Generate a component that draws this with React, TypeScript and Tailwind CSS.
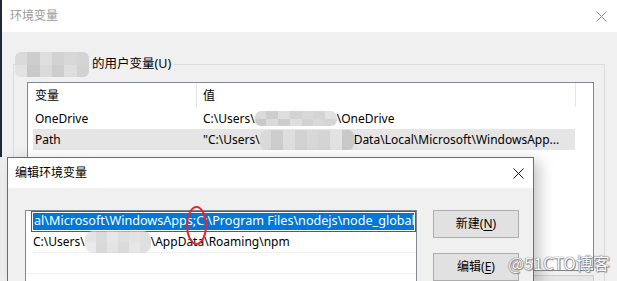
import React from 'react';

function CloseIcon({ className }: { className?: string }) {
  return (
    <svg width="11" height="11" viewBox="0 0 11 11" className={className}>
      <path d="M0.5 0.5 L10.5 10.5 M10.5 0.5 L0.5 10.5" stroke="currentColor" strokeWidth="1" fill="none" />
    </svg>
  );
}

// pixelated smear used where the screenshot hides a user name
function Smudge({ w, h, className }: { w: number; h: number; className?: string }) {
  const tiles = ['#dadada', '#d2d2d2', '#e2e2e2', '#cdcdcd', '#d8d8d8', '#c9c9c9', '#dedede', '#d4d4d4'];
  const cols = Math.max(1, Math.round(w / 12));
  return (
    <div
      className={`grid shrink-0 overflow-hidden rounded-[6px] blur-[0.6px] ${className ?? ''}`}
      style={{ width: w, height: h, gridTemplateColumns: `repeat(${cols}, 1fr)` }}
    >
      {Array.from({ length: cols * 2 }).map((_, i) => (
        <div key={i} style={{ background: tiles[(i * 3) % tiles.length] }} />
      ))}
    </div>
  );
}

function Underlined({ label, ch }: { label: string; ch: string }) {
  return (
    <span>
      {label}(<span className="underline underline-offset-2">{ch}</span>)
    </span>
  );
}

export default function App() {
  return (
    <div className="relative w-[617px] h-[281px] overflow-hidden bg-[#f0f0f0] font-['Noto_Sans','Noto_Sans_CJK_SC',sans-serif] text-[12px] leading-none text-black">
      <div className="flex h-full">
        <div className="flex w-[2px] shrink-0 flex-col">
          <div className="h-[157px] shrink-0 bg-[#1d283b]" />
          <div className="flex-1 bg-[#ededed]" />
        </div>

        {/* background window: 环境变量 */}
        <div className="flex min-w-0 flex-1 flex-col">
          <div className="flex h-[32px] shrink-0 items-center justify-between bg-white pl-[8px] pr-[10px]">
            <span className="text-[#9a9a9a]">环境变量</span>
            <CloseIcon className="text-[#8a8a8a]" />
          </div>

          <div className="min-h-0 flex-1 overflow-hidden px-[11px] pt-[20px] pr-[12px]">
            <fieldset className="border border-[#dcdcdc] pl-[13px] pr-[10px]">
              <legend className="-ml-[12px] flex items-center">
                <Smudge w={74} h={25} />
                <span className="pl-[3px] pr-[3px] text-[12.5px]">的用户变量(U)</span>
              </legend>

              <div className="mt-[5px] h-[189px] border border-[#828790] bg-white">
                <div className="flex h-[25px] pl-[5px]">
                  <div className="flex w-[163px] items-center pl-[2px]">变量</div>
                  <div className="h-[24px] w-px bg-[#e5e5e5]" />
                  <div className="flex w-[378px] items-center pl-[6px]">值</div>
                  <div className="h-[24px] w-px bg-[#e5e5e5]" />
                </div>
                <div className="ml-[5px] flex h-[21px] w-[542px] items-center">
                  <div className="w-[164px] pl-[2px]">OneDrive</div>
                  <div className="flex items-center pl-[6px]">
                    <span>C:\Users\</span>
                    <Smudge w={82} h={15} className="rounded-[3px]" />
                    <span>\OneDrive</span>
                  </div>
                </div>
                <div className="ml-[5px] flex h-[21px] w-[542px] items-center bg-[#e5e5e5]">
                  <div className="w-[164px] pl-[2px]">Path</div>
                  <div className="flex items-center overflow-hidden whitespace-nowrap pl-[6px]">
                    <span>"C:\Users\</span>
                    <Smudge w={94} h={20} className="rounded-[3px]" />
                    <span>Data\Local\Microsoft\WindowsApp...</span>
                  </div>
                </div>
              </div>

              <div className="mt-[4px] flex justify-end">
                <div className="h-[24px] w-[90px] border border-[#cfcfcf] bg-[#e6e6e6]" />
              </div>
            </fieldset>
          </div>
        </div>
      </div>

      {/* front dialog: 编辑环境变量 */}
      <div className="absolute left-[7px] top-[157px] flex h-[124px] w-[527px] flex-col overflow-hidden border border-b-0 border-[#1883d7] bg-[#f0f0f0] shadow-[6px_4px_14px_rgba(0,0,0,0.22)]">
        <div className="flex h-[30px] shrink-0 items-center justify-between bg-white pl-[7px] pr-[9px]">
          <span>编辑环境变量</span>
          <CloseIcon className="text-[#111]" />
        </div>

        <div className="flex min-h-0 flex-1 gap-[16px] pl-[17px] pt-[22px]">
          <div className="h-[100px] w-[392px] shrink-0 border border-[#828790] bg-white">
            <div className="ml-[5px] h-[21px] w-[385px] border border-[#5a5a5a] bg-white p-px">
              <div className="flex h-full items-center overflow-hidden whitespace-nowrap bg-[#0078d7] pl-[1px] text-[12.6px] text-white">
                al\Microsoft\WindowsApps;C:\Program Files\nodejs\node_global
              </div>
            </div>
            <div className="ml-[6px] flex h-[21px] items-center border-b border-[#f0f0f0] pl-px">
              <span>C:\Users\</span>
              <Smudge w={66} h={22} className="rounded-[8px] opacity-70" />
              <span>\AppData\Roaming\npm</span>
            </div>
            <div className="h-[21px] border-b border-[#f0f0f0]" />
          </div>

          <div className="flex shrink-0 flex-col gap-[15px]">
            <div className="flex h-[28px] w-[86px] shrink-0 items-center justify-center border border-[#adadad] bg-[#e1e1e1]">
              <Underlined label="新建" ch="N" />
            </div>
            <div className="flex h-[28px] w-[86px] shrink-0 items-center justify-center border border-[#adadad] bg-[#e1e1e1]">
              <Underlined label="编辑" ch="E" />
            </div>
          </div>
        </div>
      </div>

      {/* red annotation */}
      <div className="absolute left-[186px] top-[206px] h-[39px] w-[21px] rounded-[50%] border-2 border-[#e5252a]" />

      {/* watermark */}
      <div className="absolute left-[508px] top-[254px] font-['Noto_Sans_CJK_SC',sans-serif] text-[17px] text-[#f8f8f8] [text-shadow:0_0_1px_#666,0_0_1px_#666,1px_1px_1px_#888]">
        @51CTO博客
      </div>
    </div>
  );
}
